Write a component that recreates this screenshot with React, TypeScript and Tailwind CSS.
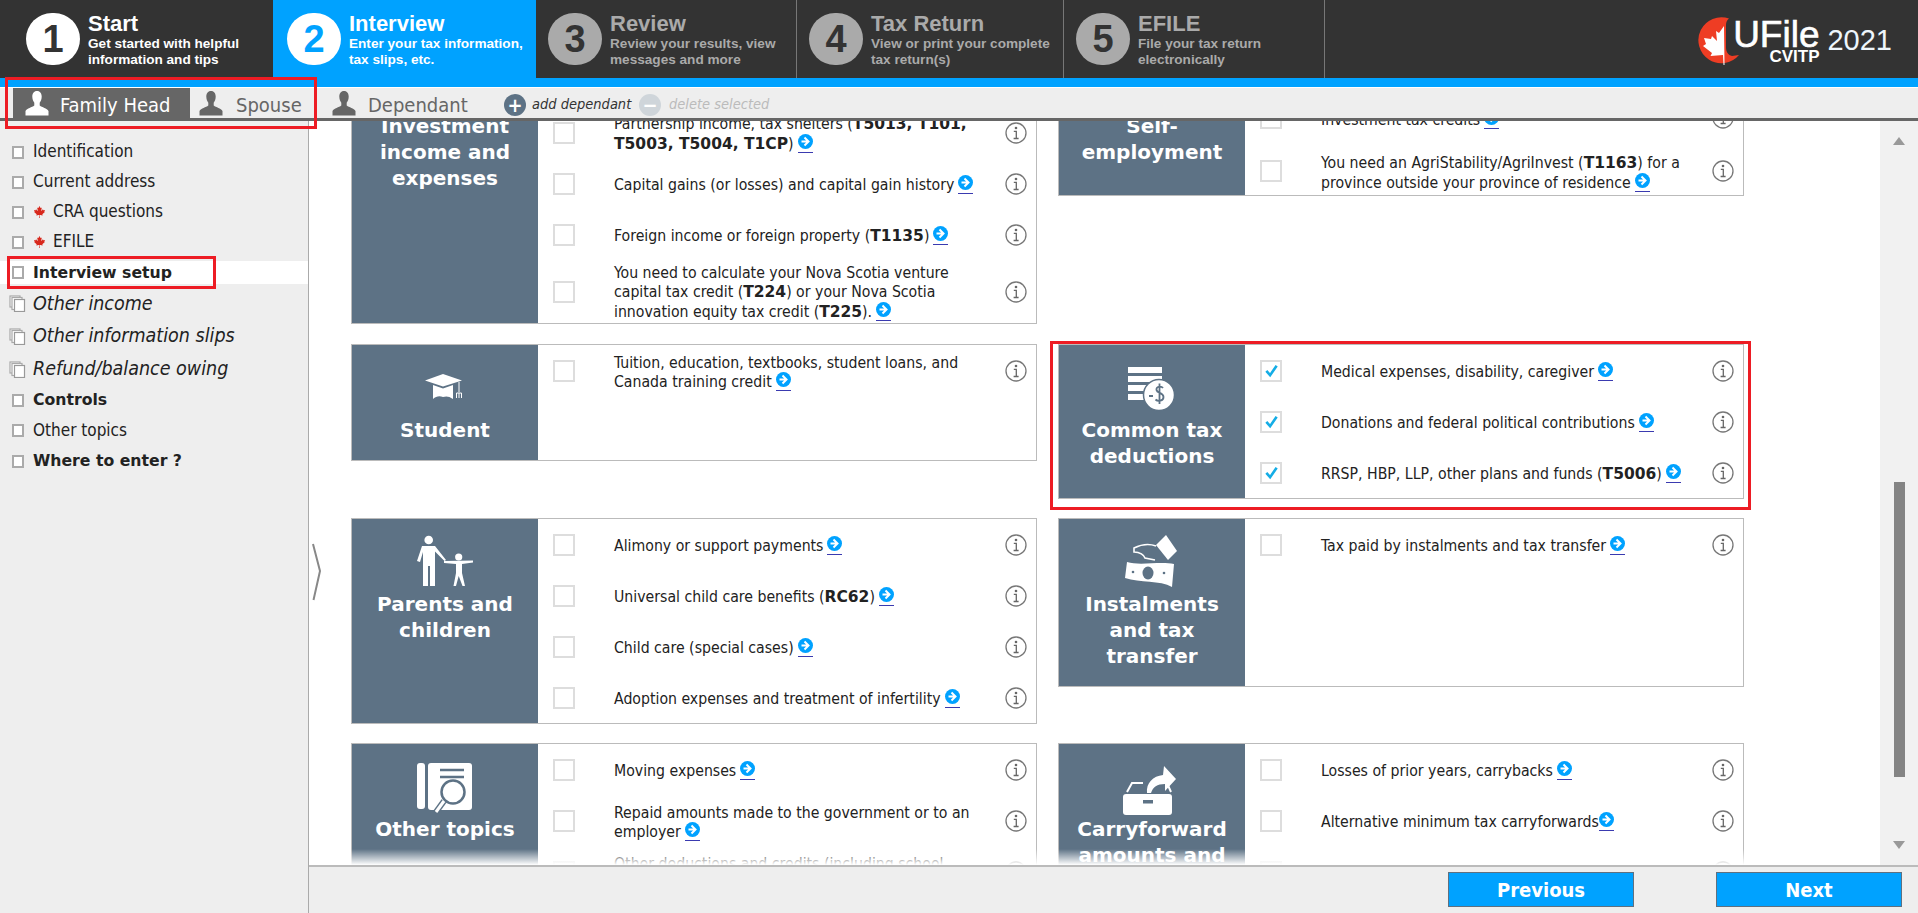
import type { ReactNode } from "react";
import { FaCanadianMapleLeaf } from "react-icons/fa";

const body = "[font-family:'DejaVu_Sans_Condensed','DejaVu_Sans',sans-serif]";
const wideBold = "font-bold [font-family:'DejaVu_Sans',sans-serif]";

function Arrow({ tight }: { tight?: boolean }) {
  return (
    <span className={`inline-block h-[19px] w-[15px] border-b border-[#3a3ab0] align-[-4px] ${tight ? "" : "ml-[4px]"}`}>
      <svg viewBox="0 0 15 15" className="block h-[15px] w-[15px]">
        <circle cx="7.5" cy="7.5" r="7.5" fill="#00a2ff" />
        <path d="M6.5 3.5 10.5 7.5 6.5 11.5M3.5 7.5H10" fill="none" stroke="#fff" strokeWidth="2" />
      </svg>
    </span>
  );
}

function Info() {
  return (
    <svg viewBox="0 0 22 22" className="h-[22px] w-[22px] shrink-0">
      <circle cx="11" cy="11" r="10" fill="#fff" stroke="#777" strokeWidth="1.3" />
      <circle cx="11" cy="6" r="1.3" fill="#666" />
      <path d="M8.8 9.3H11.3V16M8.6 16.5H13.6" fill="none" stroke="#666" strokeWidth="1.3" />
    </svg>
  );
}

function Check({ on }: { on?: boolean }) {
  return (
    <span className="flex h-[22px] w-[22px] shrink-0 items-center justify-center border-2 border-[#ddd] bg-white">
      {on && (
        <svg viewBox="0 0 16 16" className="h-[15px] w-[15px]">
          <path d="M2.5 8.5 6.5 13 13.5 3" fill="none" stroke="#14ade6" strokeWidth="2.8" />
        </svg>
      )}
    </span>
  );
}

function Row({ children, on, className = "h-[51px]" }: { children?: ReactNode; on?: boolean; className?: string }) {
  return (
    <div className={`flex items-center pl-[15px] pr-[9px] ${className}`}>
      <Check on={on} />
      <div className="ml-[39px] flex-1 pr-[16px] pt-[2px] text-[15.7px] leading-[19px] text-[#222] [&_b]:text-[15.5px] [&_b]:[font-family:'DejaVu_Sans',sans-serif]">
        {children}
      </div>
      <Info />
    </div>
  );
}

function Card({
  title,
  icon,
  children,
  className = "",
  bodyClass = "",
}: {
  title: ReactNode;
  icon?: ReactNode;
  children: ReactNode;
  className?: string;
  bodyClass?: string;
}) {
  return (
    <div className={`flex self-start border border-[#bbb] bg-white ${className}`}>
      <div className={`flex w-[186px] shrink-0 flex-col items-center bg-[#5d7285] pb-[17px] text-center text-[20px] leading-[26px] text-white ${wideBold}`}>
        {icon ? <div className="flex h-[72px] items-center justify-center pt-[12px]">{icon}</div> : <div className="h-[20px]" />}
        {title}
      </div>
      <div className={`flex-1 ${bodyClass}`}>{children}</div>
    </div>
  );
}

function Person({ className }: { className: string }) {
  return (
    <svg viewBox="0 0 26 26" className={`h-[26px] w-[26px] shrink-0 ${className}`}>
      <path d="M13 1C9.8 1 8.3 3.6 8.3 6.6 8.3 9.4 9.3 11.500 10.300 12.800V15.500C8 17.500 3 18 1.500 21V25.500H24.500V21C23 18 18 17.500 15.700 15.500V12.800C16.700 11.500 17.700 9.400 17.700 6.600 17.700 3.600 16.200 1 13 1Z" fill="currentColor" />
    </svg>
  );
}

function Step({
  n,
  title,
  lines,
  state,
  className,
}: {
  n: number;
  title: string;
  lines: string[];
  state: "done" | "active" | "off";
  className: string;
}) {
  const circle = state === "off" ? "bg-[#aaa] text-[#333]" : state === "active" ? "bg-white text-[#00a2ff]" : "bg-white text-[#333]";
  const text = state === "off" ? "text-[#aaa]" : "text-white";
  return (
    <div className={`flex h-full items-center ${className}`}>
      <div className={`flex h-[52px] w-[54px] shrink-0 items-center justify-center rounded-full text-[38px] font-bold ${circle}`}>{n}</div>
      <div className={`ml-[8px] ${text}`}>
        <div className="text-[22px] font-bold leading-[25px]">{title}</div>
        {lines.map((l) => (
          <div key={l} className="text-[13.6px] font-bold leading-[16px]">{l}</div>
        ))}
      </div>
    </div>
  );
}

function Pages() {
  return (
    <svg viewBox="0 0 17 17" className="ml-[9px] mr-[7px] h-[17px] w-[17px] shrink-0" fill="#fff" stroke="#aaa" strokeWidth="1.2">
      <rect x="1" y="1" width="10" height="11" />
      <rect x="3" y="2.500" width="10" height="12" />
      <rect x="5.500" y="4.500" width="10" height="12" stroke="#999" />
    </svg>
  );
}

function SideRow({ children, className = "h-[30px]", paged }: { children: ReactNode; className?: string; paged?: boolean }) {
  return (
    <div className={`flex items-center text-[#222] ${className}`}>
      {paged ? (
        <Pages />
      ) : (
        <span className="ml-[12px] mr-[9px] h-[13px] w-[12px] shrink-0 border-2 border-[#aaa] bg-white" />
      )}
      {children}
    </div>
  );
}

const Leaf = () => <FaCanadianMapleLeaf className="mr-[7px] h-[12px] w-[13px] text-[#d8281c]" />;

function StudentIcon() {
  return (
    <svg viewBox="0 0 40 26" className="h-[26px] w-[40px]" fill="#fff">
      <path d="M0 6.500 18 0 37 6.500 18 12.500Z" />
      <path d="M8 11 18 14.500 28 11V25C24 22 21 22 18 23 14 21.500 11 22.500 8 25Z" />
      <path d="M34 8V18M31.500 24V19H36.500V24M34 19V24" fill="none" stroke="#fff" strokeWidth="1" />
    </svg>
  );
}

function DeductionIcon() {
  return (
    <svg viewBox="0 0 52 48" className="h-[48px] w-[52px] translate-y-[2px]" fill="#fff">
      <rect x="2" y="2" width="34" height="6" />
      <rect x="2" y="11" width="34" height="6" />
      <rect x="2" y="20" width="24" height="6" />
      <rect x="2" y="29" width="16" height="6" />
      <circle cx="33" cy="30" r="15.500" stroke="#5d7285" strokeWidth="1.500" />
      <path d="M23 31H27M37 23C35 20.500 30 21.500 30.500 25 31 28.500 37.500 27.500 37.500 32 37.500 36 32 37 29.500 34.500M33.500 18.500V39" fill="none" stroke="#5d7285" strokeWidth="1.800" />
    </svg>
  );
}

function FamilyIcon() {
  return (
    <svg viewBox="0 0 60 52" className="h-[52px] w-[60px]" fill="#fff">
      <circle cx="13.700" cy="5" r="4.300" />
      <path d="M7 11H20L31 25 29.500 26 20 16.500V51H15V31H13V51H8V17L5 27 2 26Z" />
      <circle cx="43.700" cy="22" r="3.600" />
      <path d="M29 26 58 25.500V27.500L47 29V38L50 51H47.500L43.700 41 41 51H38.500L41 38V29L29 28Z" />
    </svg>
  );
}

function MoneyIcon() {
  return (
    <svg viewBox="0 0 56 56" className="h-[56px] w-[56px]" fill="#fff">
      <path d="M42 2 53 18 44 27 32 12Z" />
      <path d="M32 13C24 10 16 12 10 15V19C16 19 20 22 21 25L31 27" fill="none" stroke="#fff" strokeWidth="1.600" />
      <path d="M3 29C16 33 36 28 50 31L48 54C36 47 16 50 1 45Z" />
      <ellipse cx="24" cy="40" rx="5.500" ry="6.500" fill="#5d7285" />
      <circle cx="9" cy="39" r="1.300" fill="#5d7285" />
      <circle cx="40" cy="40" r="1.300" fill="#5d7285" />
    </svg>
  );
}

function TopicsIcon() {
  return (
    <svg viewBox="0 0 56 52" className="h-[52px] w-[56px] translate-y-[3px]" fill="#fff">
      <rect x="0" y="0" width="8" height="46" rx="3" />
      <rect x="11" y="0" width="44" height="47" rx="3" />
      <path d="M23 7H47M23 14H47" stroke="#5d7285" strokeWidth="2.500" />
      <circle cx="36" cy="29" r="11.500" stroke="#5d7285" strokeWidth="2.500" />
      <path d="M27 38 19 49" stroke="#5d7285" strokeWidth="6" />
      <path d="M27 38 19 49" stroke="#fff" strokeWidth="3" />
    </svg>
  );
}

function CarryIcon() {
  return (
    <svg viewBox="0 0 58 50" className="h-[50px] w-[58px] translate-y-[5px]" fill="#fff">
      <rect x="0" y="28" width="49" height="21" rx="3" />
      <rect x="20" y="34" width="10" height="3.500" fill="#5d7285" />
      <path d="M4 26 9 17H20M39 17H44L48 26" fill="none" stroke="#fff" strokeWidth="2" />
      <path d="M24 27C23 17 30 10 40 9L41 0 53 13 42 25V18C34 18 30 21 28 27Z" />
    </svg>
  );
}

function Logo() {
  return (
    <div className="ml-auto mr-[26px] flex h-full items-center pt-[2px]">
      <svg viewBox="0 0 50 50" className="mr-[-12px] h-[50px] w-[50px] shrink-0">
        <path d="M34 3.500A23 23 0 1 0 44 40L37 41C33 40 31 37 31 32V10C31 7 32 5 34 3.500Z" fill="#ee3d24" />
        <path d="M29 11 24 18 21 16 22 26 17 21 16 24 9 23 11 29 8 31 17 38 15.500 41 28 40 28.500 50H29.500Z" fill="#fff" />
      </svg>
      <div className="relative flex flex-col items-end">
        <span className="text-[37px] leading-[38px] text-white [-webkit-text-stroke:0.6px_white]">UFile</span>
        <span className="mt-[-4px] text-[17px] font-bold leading-[14px] text-white">CVITP</span>
      </div>
      <span className="ml-[8px] text-[29px] leading-[30px] text-[#eef6fb]">2021</span>
    </div>
  );
}

export default function App() {
  return (
    <div className={`relative flex h-screen w-full flex-col overflow-hidden bg-white ${body}`}>
      <header className="flex h-[78px] shrink-0 bg-[#333] [font-family:'Liberation_Sans',Arial,sans-serif]">
        <Step n={1} state="done" title="Start" lines={["Get started with helpful", "information and tips"]} className="w-[273px] pl-[26px]" />
        <Step n={2} state="active" title="Interview" lines={["Enter your tax information,", "tax slips, etc."]} className="w-[263px] bg-[#00a2ff] pl-[14px]" />
        <Step n={3} state="off" title="Review" lines={["Review your results, view", "messages and more"]} className="w-[261px] border-r border-[#777] pl-[12px]" />
        <Step n={4} state="off" title="Tax Return" lines={["View or print your complete", "tax return(s)"]} className="w-[267px] border-r border-[#777] pl-[12px]" />
        <Step n={5} state="off" title="EFILE" lines={["File your tax return", "electronically"]} className="w-[261px] border-r border-[#777] pl-[12px]" />
        <Logo />
      </header>
      <div className="h-[9px] shrink-0 bg-[#00a2ff]" />
      <div className="h-px shrink-0 bg-white" />

      <div className="flex h-[30px] shrink-0 items-stretch bg-[#eee] pl-[13px] text-[20px]">
        <div className="flex w-[177px] items-center bg-[#666] pl-[11px] text-white">
          <Person className="text-white" />
          <span className="ml-[10px] pt-[3px]">Family Head</span>
        </div>
        <div className="flex w-[141px] items-center pl-[8px] text-[#666]">
          <Person className="text-[#666]" />
          <span className="ml-[12px] pt-[3px]">Spouse</span>
        </div>
        <div className="flex w-[173px] items-center text-[#666]">
          <Person className="text-[#666]" />
          <span className="ml-[11px] pt-[3px]">Dependant</span>
        </div>
        <div className="flex items-center pt-[3px] text-[14.5px] italic text-[#333]">
          <span className="flex h-[22px] w-[22px] items-center justify-center rounded-full bg-[#5d7285] text-[20px] not-italic font-bold leading-none text-white">+</span>
          <span className="ml-[6px] w-[107px]">add dependant</span>
          <span className="flex h-[22px] w-[22px] items-center justify-center rounded-full bg-[#cfd5da] text-[20px] not-italic font-bold leading-none text-white">−</span>
          <span className="ml-[8px] text-[#bbb]">delete selected</span>
        </div>
      </div>
      <div className="h-[3px] shrink-0 bg-[#666]" />

      <div className="flex min-h-0 flex-1">
        <aside className="w-[309px] shrink-0 border-r border-[#aaa] bg-[#eee] pt-[16px] text-[17px]">
          <SideRow>Identification</SideRow>
          <SideRow>Current address</SideRow>
          <SideRow><Leaf />CRA questions</SideRow>
          <SideRow className="mb-[4px] h-[30px]"><Leaf />EFILE</SideRow>
          <SideRow className={`mb-[4px] h-[23px] bg-white text-[15.7px] ${wideBold}`}>Interview setup</SideRow>
          <SideRow paged className="h-[31px] text-[19.5px] italic">Other income</SideRow>
          <SideRow paged className="h-[34px] text-[19.5px] italic">Other information slips</SideRow>
          <SideRow paged className="h-[32px] text-[19.5px] italic">Refund/balance owing</SideRow>
          <SideRow className={`h-[30px] text-[15.7px] ${wideBold}`}>Controls</SideRow>
          <SideRow className="h-[31px]">Other topics</SideRow>
          <SideRow className={`h-[30px] text-[15.7px] ${wideBold}`}>Where to enter ?</SideRow>
        </aside>

        <div className="flex min-w-0 flex-1 flex-col">
          <div className="flex min-h-0 flex-1">
            <main className="relative min-w-0 flex-1 overflow-hidden">
              <div className="mt-[-29px] grid grid-cols-[686px_686px] gap-x-[21px] gap-y-[19px] pl-[42px]">
                <Card
                  className="mb-[1px]"
                  bodyClass="pt-[15px]"
                  title={<>Investment<br />income and<br />expenses</>}
                >
                  <Row className="h-[50px]">Partnership income, tax shelters (<b>T5013, T101, T5003, T5004, T1CP</b>)<Arrow /></Row>
                  <Row>Capital gains (or losses) and capital gain history<Arrow /></Row>
                  <Row>Foreign income or foreign property (<b>T1135</b>)<Arrow /></Row>
                  <Row className="h-[63px]">You need to calculate your Nova Scotia venture capital tax credit (<b>T224</b>) or your Nova Scotia innovation equity tax credit (<b>T225</b>).<Arrow /></Row>
                </Card>
                <Card title={<>Self-<br />employment</>}>
                  <Row className="h-[50px]">Investment tax credits<Arrow /></Row>
                  <Row className="h-[52px] pt-[4px]">You need an AgriStability/AgriInvest (<b>T1163</b>) for a province outside your province of residence<Arrow /></Row>
                </Card>

                <Card icon={<StudentIcon />} title="Student">
                  <Row>Tuition, education, textbooks, student loans, and Canada training credit<Arrow /></Row>
                </Card>
                <Card icon={<DeductionIcon />} title={<>Common tax<br />deductions</>}>
                  <Row on>Medical expenses, disability, caregiver<Arrow /></Row>
                  <Row on>Donations and federal political contributions<Arrow /></Row>
                  <Row on>RRSP, HBP, LLP, other plans and funds (<b>T5006</b>)<Arrow /></Row>
                </Card>

                <Card icon={<FamilyIcon />} title={<>Parents and<br />children</>}>
                  <Row>Alimony or support payments<Arrow /></Row>
                  <Row>Universal child care benefits (<b>RC62</b>)<Arrow /></Row>
                  <Row>Child care (special cases)<Arrow /></Row>
                  <Row>Adoption expenses and treatment of infertility<Arrow /></Row>
                </Card>
                <Card icon={<MoneyIcon />} title={<>Instalments<br />and tax<br />transfer</>}>
                  <Row>Tax paid by instalments and tax transfer<Arrow /></Row>
                </Card>

                <Card icon={<TopicsIcon />} title="Other topics">
                  <Row>Moving expenses<Arrow /></Row>
                  <Row>Repaid amounts made to the government or to an employer<Arrow /></Row>
                  <Row>Other deductions and credits (including school<br />&nbsp;</Row>
                </Card>
                <Card icon={<CarryIcon />} title={<>Carryforward<br />amounts and</>}>
                  <Row>Losses of prior years, carrybacks<Arrow /></Row>
                  <Row>Alternative minimum tax carryforwards<Arrow tight /></Row>
                  <Row />
                </Card>
              </div>

              <svg viewBox="0 0 10 58" className="absolute left-[3px] top-[422px] h-[58px] w-[10px]">
                <path d="M1 1 8 28 1.500 57" fill="none" stroke="#888" strokeWidth="2" />
              </svg>
              <div className="absolute bottom-0 left-0 right-0 h-[16px] bg-linear-to-b from-transparent to-white" />
            </main>

            <div className="flex w-[38px] shrink-0 flex-col items-center bg-[#f1f1f1] pt-[16px] text-[#777]">
              <svg viewBox="0 0 12 8" className="h-[8px] w-[12px]"><path d="M6 0 12 8H0Z" fill="#999" /></svg>
              <div className="mt-[337px] h-[295px] w-[11px] bg-[#848484]" />
              <svg viewBox="0 0 12 8" className="mt-[64px] h-[8px] w-[12px]"><path d="M6 8 12 0H0Z" fill="#999" /></svg>
            </div>
          </div>

          <footer className="flex h-[48px] shrink-0 items-start justify-end gap-[82px] border-t-2 border-[#bbb] bg-[#eee] pr-[16px] pt-[5px]">
            <button className="h-[35px] w-[186px] border border-[#5f7080] bg-[#00a2ff] text-[20px] font-bold text-white">Previous</button>
            <button className="h-[35px] w-[186px] border border-[#5f7080] bg-[#00a2ff] text-[20px] font-bold text-white">Next</button>
          </footer>
        </div>
      </div>

      {/* annotations drawn on the screenshot */}
      <div className="absolute left-[5px] top-[77px] h-[52px] w-[312px] border-[3px] border-[#ed1c24]" />
      <div className="absolute left-[7px] top-[256px] h-[33px] w-[209px] border-[3px] border-[#ed1c24]" />
      <div className="absolute left-[1050px] top-[341px] h-[169px] w-[701px] border-[3px] border-[#ed1c24]" />
    </div>
  );
}
